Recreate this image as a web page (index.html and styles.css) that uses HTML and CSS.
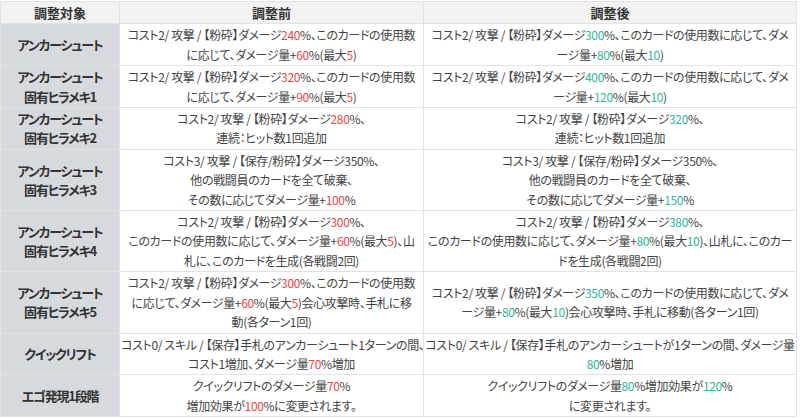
FILE: index.html
```html
<!DOCTYPE html>
<html lang="ja">
<head>
<meta charset="utf-8">
<title>調整内容</title>
<link rel="stylesheet" href="styles.css">
</head>
<body>
<table class="adj">
  <colgroup>
    <col class="c-target">
    <col class="c-before">
    <col class="c-after">
  </colgroup>
  <thead>
    <tr><th>調整対象</th><th>調整前</th><th>調整後</th></tr>
  </thead>
  <tbody>
    <tr>
      <th>アンカーシュート</th>
      <td>コスト2/ 攻撃 / 【粉砕】ダメージ<span class="old">240</span>%、このカードの使用数<br>に応じて、ダメージ量+<span class="old">60</span>%(最大<span class="old">5</span>)</td>
      <td>コスト2/ 攻撃 / 【粉砕】ダメージ<span class="new">300</span>%、このカードの使用数に応じて、ダメ<br>ージ量+<span class="new">80</span>%(最大<span class="new">10</span>)</td>
    </tr>
    <tr>
      <th>アンカーシュート<br>固有ヒラメキ1</th>
      <td>コスト2/ 攻撃 / 【粉砕】ダメージ<span class="old">320</span>%、このカードの使用数<br>に応じて、ダメージ量+<span class="old">90</span>%(最大<span class="old">5</span>)</td>
      <td>コスト2/ 攻撃 / 【粉砕】ダメージ<span class="new">400</span>%、このカードの使用数に応じて、ダメ<br>ージ量+<span class="new">120</span>%(最大<span class="new">10</span>)</td>
    </tr>
    <tr>
      <th>アンカーシュート<br>固有ヒラメキ2</th>
      <td>コスト2/ 攻撃 / 【粉砕】ダメージ<span class="old">280</span>%、<br>連続：ヒット数1回追加</td>
      <td>コスト2/ 攻撃 / 【粉砕】ダメージ<span class="new">320</span>%、<br>連続：ヒット数1回追加</td>
    </tr>
    <tr>
      <th>アンカーシュート<br>固有ヒラメキ3</th>
      <td>コスト3/ 攻撃 / 【保存/粉砕】ダメージ350%、<br>他の戦闘員のカードを全て破棄、<br>その数に応じてダメージ量+<span class="old">100</span>%</td>
      <td>コスト3/ 攻撃 / 【保存/粉砕】ダメージ350%、<br>他の戦闘員のカードを全て破棄、<br>その数に応じてダメージ量+<span class="new">150</span>%</td>
    </tr>
    <tr>
      <th>アンカーシュート<br>固有ヒラメキ4</th>
      <td>コスト2/ 攻撃 / 【粉砕】ダメージ<span class="old">300</span>%、<br>このカードの使用数に応じて、ダメージ量+<span class="old">60</span>%(最大<span class="old">5</span>)、山<br>札に、このカードを生成(各戦闘2回)</td>
      <td>コスト2/ 攻撃 / 【粉砕】ダメージ<span class="new">380</span>%、<br>このカードの使用数に応じて、ダメージ量+<span class="new">80</span>%(最大<span class="new">10</span>)、山札に、このカー<br>ドを生成(各戦闘2回)</td>
    </tr>
    <tr>
      <th>アンカーシュート<br>固有ヒラメキ5</th>
      <td>コスト2/ 攻撃 / 【粉砕】ダメージ<span class="old">300</span>%、このカードの使用数<br>に応じて、ダメージ量+<span class="old">60</span>%(最大<span class="old">5</span>)会心攻撃時、手札に移<br>動(各ターン1回)</td>
      <td>コスト2/ 攻撃 / 【粉砕】ダメージ<span class="new">350</span>%、このカードの使用数に応じて、ダメ<br>ージ量+<span class="new">80</span>%(最大<span class="new">10</span>)会心攻撃時、手札に移動(各ターン1回)</td>
    </tr>
    <tr>
      <th>クイックリフト</th>
      <td>コスト0/ スキル / 【保存】手札のアンカーシュート1ターンの間、<br>コスト1増加、ダメージ量<span class="old">70</span>%増加</td>
      <td>コスト0/ スキル / 【保存】手札のアンカーシュートが1ターンの間、ダメージ量<br><span class="new">80</span>%増加</td>
    </tr>
    <tr>
      <th>エゴ発現1段階</th>
      <td>クイックリフトのダメージ量<span class="old">70</span>%<br>増加効果が<span class="old">100</span>%に変更されます。</td>
      <td>クイックリフトのダメージ量<span class="new">80</span>%増加効果が<span class="new">120</span>%<br>に変更されます。</td>
    </tr>
  </tbody>
</table>
</body>
</html>
```

FILE: styles.css
```css
html, body {
  margin: 0;
  padding: 0;
  background: #ffffff;
}

body {
  font-family: "Noto Sans CJK JP", "Noto Sans", sans-serif;
  font-size: 12px;
  letter-spacing: -0.35px;
  color: #444444;
  font-feature-settings: "palt";
}

.adj {
  border-collapse: collapse;
  table-layout: fixed;
  width: 796px;
  margin-top: 1px;
}

.c-target { width: 119px; }
.c-before { width: 304px; }
.c-after { width: 373px; }

.adj th,
.adj td {
  border: 1px solid #e2e2e2;
  padding: 1px 1px;
  line-height: 19.4px;
  text-align: center;
  vertical-align: middle;
  white-space: nowrap;
}

.adj thead th {
  background: #f2f2f2;
  color: #333333;
  font-weight: bold;
  font-size: 13px;
  letter-spacing: 0;
}

.adj tbody th {
  background: #d6d9dd;
  color: #333333;
  font-weight: bold;
  font-size: 13px;
  letter-spacing: -1.2px;
}

.old { color: #ef4444; }
.new { color: #2bb89c; }
```
